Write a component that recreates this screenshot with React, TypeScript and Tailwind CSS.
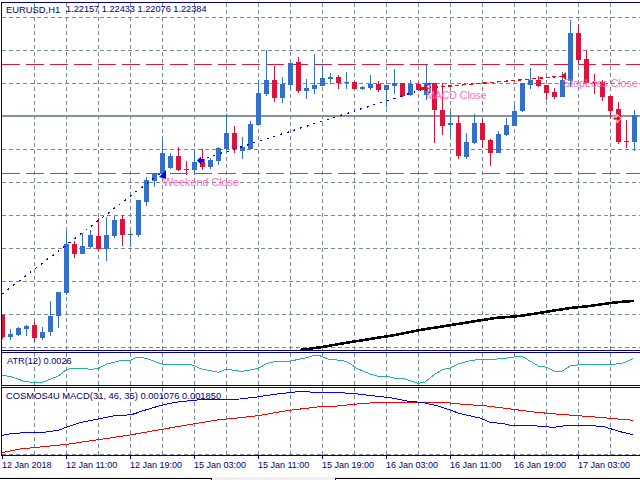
import React from 'react';

const BLUE = '#3370c9';
const RED = '#dc143c';
const GRID = '#778899';

// [colour, body top, body bottom, high, low], one bar every 8px starting at x=2
const candles: [string, number, number, number, number][] = [
  ['r', 315, 337, 315, 339], ['b', 334, 337, 329, 340], ['b', 328, 335, 327, 336], ['b', 326, 329, 325, 336],
  ['r', 325, 338, 322, 342], ['b', 332, 338, 327, 340], ['b', 316, 332, 301, 336], ['b', 292, 316, 292, 328],
  ['b', 244, 293, 231, 295], ['r', 244, 254, 241, 258], ['b', 246, 254, 233, 254], ['b', 235, 247, 230, 249],
  ['r', 236, 249, 218, 251], ['b', 235, 249, 217, 261], ['b', 220, 236, 216, 238], ['r', 219, 235, 215, 246],
  ['b', 234, 235, 231, 247], ['b', 200, 235, 200, 237], ['b', 180, 202, 177, 206], ['b', 173, 181, 173, 187],
  ['b', 153, 173, 139, 176], ['b', 156, 168, 153, 169], ['r', 156, 170, 147, 171], ['r', 169, 170, 161, 175],
  ['b', 162, 170, 150, 175], ['r', 162, 167, 149, 170], ['b', 160, 167, 158, 169], ['b', 148, 161, 147, 165],
  ['b', 133, 149, 114, 150], ['r', 133, 149, 126, 153], ['b', 147, 151, 137, 159], ['b', 124, 149, 121, 150],
  ['b', 93, 125, 80, 125], ['b', 80, 94, 50, 96], ['r', 80, 98, 66, 102], ['b', 84, 98, 77, 103],
  ['b', 63, 85, 62, 89], ['r', 62, 91, 57, 93], ['b', 88, 91, 79, 99], ['b', 85, 89, 54, 94],
  ['b', 78, 86, 64, 86], ['b', 77, 79, 73, 84], ['r', 77, 83, 75, 89], ['b', 82, 83, 72, 89],
  ['r', 82, 89, 81, 89], ['b', 87, 89, 86, 90], ['b', 84, 88, 75, 90], ['r', 84, 90, 81, 92],
  ['b', 85, 90, 85, 107], ['b', 83, 86, 69, 94], ['r', 83, 96, 83, 97], ['b', 84, 95, 80, 96],
  ['r', 84, 90, 82, 91], ['b', 83, 95, 65, 100], ['r', 83, 110, 83, 143], ['r', 110, 126, 83, 135],
  ['b', 123, 125, 111, 137], ['r', 123, 156, 116, 159], ['b', 142, 157, 133, 159], ['b', 123, 143, 114, 144],
  ['r', 123, 140, 119, 148], ['r', 140, 153, 139, 166], ['b', 134, 153, 131, 153], ['b', 125, 135, 118, 136],
  ['b', 111, 126, 105, 126], ['b', 83, 111, 83, 112], ['b', 80, 85, 68, 89], ['r', 80, 86, 76, 87],
  ['r', 85, 93, 85, 100], ['r', 92, 97, 88, 99], ['b', 80, 97, 72, 97], ['b', 33, 81, 20, 87],
  ['r', 33, 60, 24, 64], ['r', 59, 83, 50, 83], ['r', 82, 83, 74, 94], ['r', 82, 97, 80, 101],
  ['r', 96, 111, 96, 118], ['r', 109, 142, 102, 144], ['r', 141, 142, 120, 148], ['b', 115, 142, 110, 151],
];

const gridX = Array.from({ length: 19 }, (_, i) => 34 + i * 32);
const gridY = [17, 50, 83, 149, 182, 215, 248, 281, 314, 347];

const maLine =
  '300,350 322,347 345,343 370,339 395,335 420,330 445,326 470,322 495,318 520,316 545,312 570,308 590,306 610,303 625,301.5 634,301';

const atrLeft = [
  [5, 105], [40, 112], [75, 125], [100, 127], [125, 128], [145, 120], [175, 108], [200, 88], [225, 84], [250, 84],
  [270, 88], [295, 86], [320, 72], [345, 66], [365, 61], [390, 61], [410, 52], [425, 52], [445, 57], [485, 72],
  [560, 72], [580, 76], [600, 86], [625, 91], [655, 97], [680, 87], [700, 91], [725, 94], [750, 90], [775, 85],
  [800, 71], [820, 66], [845, 64], [870, 64], [895, 58], [920, 53], [940, 47], [960, 46],
];
const atrRight = [
  [0, 198], [25, 207], [70, 212], [90, 220], [110, 235], [150, 252], [175, 259], [205, 260], [225, 265], [250, 265],
  [275, 274], [295, 280], [315, 276], [345, 252], [370, 238], [390, 234], [415, 222], [450, 212], [480, 208], [520, 208],
  [560, 204], [605, 198], [625, 210], [655, 228], [680, 232], [705, 244], [725, 244], [750, 228], [785, 223], [880, 223],
  [915, 218], [940, 205],
];
const macdLeft = [
  [5, 286], [40, 280], [80, 278], [130, 277], [175, 271], [200, 261], [240, 248], [295, 237], [340, 228], [395, 224],
  [430, 212], [480, 197], [525, 187], [590, 180], [650, 178], [720, 177], [770, 171], [830, 162], [905, 154], [930, 156],
  [960, 157],
];
const macdRight = [
  [0, 308], [50, 308], [100, 310], [145, 316], [210, 323], [260, 333], [310, 338], [350, 347], [390, 360], [420, 371],
  [480, 384], [510, 397], [550, 401], [580, 408], [600, 406], [650, 408], [700, 412], [745, 406], [810, 406], [855, 411],
  [900, 425], [940, 434],
];
const signalLeft = [
  [5, 338], [60, 327], [130, 320], [200, 313], [295, 299], [390, 285], [485, 268], [580, 252], [650, 240], [720, 233],
  [775, 227], [860, 212], [960, 200],
];
const signalRight = [
  [0, 349], [40, 349], [110, 342], [165, 338], [380, 338], [420, 342], [500, 348], [580, 358], [650, 367], [720, 373],
  [800, 379], [860, 384], [940, 391],
];

const toPoints = (left: number[][], right: number[][]) =>
  [
    ...left.map(([u, v]) => `${u / 3},${340 + v / 3}`),
    ...right.map(([u, v]) => `${320 + u / 3},${290 + v / 3}`),
  ].join(' ');

const axisLabels = [
  '12 Jan 2018', '12 Jan 11:00', '12 Jan 19:00', '15 Jan 03:00', '15 Jan 11:00',
  '15 Jan 19:00', '16 Jan 03:00', '16 Jan 11:00', '16 Jan 19:00', '17 Jan 03:00',
];

const GridLines = ({ y1, y2 }: { y1: number; y2: number }) => (
  <g stroke={GRID} strokeDasharray="4 3" shapeRendering="crispEdges">
    {gridX.map((x) => (
      <line key={x} x1={x + 0.5} x2={x + 0.5} y1={y1} y2={y2} />
    ))}
  </g>
);

const Arrow = ({ d, fill, stroke }: { d: string; fill: string; stroke?: string }) => (
  <polygon points={d} fill={fill} stroke={stroke} strokeWidth={stroke ? 1 : 0} />
);

const MainChart = () => (
  <svg width="638" height="347" viewBox="2 3 638 347" className="block">
    <GridLines y1={3} y2={350} />
    <g stroke={GRID} strokeDasharray="4 3" shapeRendering="crispEdges">
      {gridY.map((y) => (
        <line key={y} x1={2} x2={640} y1={y + 0.5} y2={y + 0.5} />
      ))}
    </g>
    <g shapeRendering="crispEdges">
      <line x1={2} x2={640} y1={116} y2={116} stroke="#84929f" strokeWidth="2" />
      <line x1={2} x2={640} y1={64.5} y2={64.5} stroke={RED} strokeDasharray="18 6" />
      <line x1={2} x2={640} y1={173.5} y2={173.5} stroke={BLUE} strokeDasharray="18 6" />
    </g>
    <polyline points={maLine} fill="none" stroke="#000" strokeWidth="2.6" shapeRendering="crispEdges" />
    <g shapeRendering="crispEdges">
      {candles.map(([c, top, bottom, high, low], i) => {
        const x = 2 + i * 8;
        const color = c === 'b' ? BLUE : RED;
        return (
          <g key={i} fill={color}>
            <rect x={x} y={high} width={1} height={low - high} />
            <rect x={x - 2} y={top} width={5} height={bottom - top} />
          </g>
        );
      })}
    </g>
    <g fill="none" strokeWidth="1.3" shapeRendering="crispEdges">
      <line x1={2} y1={294} x2={162} y2={172} stroke="#0000ff" strokeDasharray="2 5" />
      <line x1={200} y1={160} x2={427} y2={88} stroke="#0000ff" strokeDasharray="2 5" />
      <line x1={427} y1={88} x2={565} y2={76} stroke="#ff0000" strokeDasharray="4 3" />
    </g>
    <Arrow d="166,170 166,179 159,177" fill="#0000ff" />
    <Arrow d="197,160.5 201,156.5 201,159 204.5,159 204.5,162 201,162 201,164.5" fill="#0000ff" />
    <Arrow d="424,88 430,83 430,93" fill="#fff" stroke="#0000ff" />
    <Arrow d="421,87 425,87 425,84.5 429,88.5 425,92 425,90 421,90" fill="#ff0000" />
    <Arrow d="561,76 566,72 566,80" fill="#ff0000" />
    <Arrow d="613,117 617,117 617,114 621,118.5 617,123 617,120 613,120" fill="#ff0000" stroke="#fff" />
  </svg>
);

const ChartLabel = ({ className, children }: { className: string; children: React.ReactNode }) => (
  <span className={`absolute whitespace-nowrap leading-none ${className}`}>{children}</span>
);

export default function App() {
  return (
    <div className="w-[640px] h-[480px] bg-white overflow-hidden flex flex-col pt-[2px] font-['Liberation_Sans',sans-serif] text-[#000080]">
      <div className="ml-px flex flex-col border-l border-[#000080]">
        <div className="relative h-[349px] border-y border-[#000080]">
          <MainChart />
          <ChartLabel className="left-[4px] top-[2px] text-[9.2px] flex">
            <span className="w-[60px] text-[9.4px]">EURUSD,H1</span>
            <span>1.22157 1.22433 1.22076 1.22384</span>
          </ChartLabel>
          <ChartLabel className="left-[161px] top-[174px] text-[10.8px] text-[#ff70b8]">Weekend Close</ChartLabel>
          <ChartLabel className="left-[424px] top-[87px] text-[10.5px] text-[#ff70b8]">MACD Close</ChartLabel>
          <ChartLabel className="left-[561px] top-[75px] text-[10.7px] text-[#ff70b8]">StopLoss Close</ChartLabel>
        </div>
        <div className="relative h-[34px] mt-px border-y border-[#000080]">
          <svg width="638" height="32" viewBox="2 353 638 32" className="block">
            <GridLines y1={353} y2={385} />
            <polyline
              points={toPoints(atrLeft, atrRight)}
              fill="none"
              stroke="#20b2aa"
              strokeWidth="1"
              shapeRendering="crispEdges"
            />
          </svg>
          <ChartLabel className="left-[5px] top-[4px] text-[9.2px]">ATR(12) 0.0026</ChartLabel>
        </div>
        <div className="relative h-[69px] mt-px border-y border-[#000080]">
          <svg width="638" height="67" viewBox="2 388 638 67" className="block">
            <GridLines y1={388} y2={455} />
            <line x1={2} x2={640} y1={454.5} y2={454.5} stroke={GRID} strokeDasharray="4 3" shapeRendering="crispEdges" />
            <polyline
              points={toPoints(signalLeft, signalRight)}
              fill="none"
              stroke="#ff0000"
              strokeWidth="1"
              shapeRendering="crispEdges"
            />
            <polyline
              points={toPoints(macdLeft, macdRight)}
              fill="none"
              stroke="#0000ff"
              strokeWidth="1"
              shapeRendering="crispEdges"
            />
          </svg>
          <ChartLabel className="left-[4px] top-[3px] text-[9.4px]">
            COSMOS4U MACD(31, 46, 35) 0.001076 0.001850
          </ChartLabel>
        </div>
      </div>
      <div className="flex h-[21px] pl-[2px] text-[9px] leading-none">
        {axisLabels.map((label) => (
          <div key={label} className="w-[64px] shrink-0 flex flex-col">
            <div className="w-px h-[3px] bg-[#000080]" />
            <span className="whitespace-nowrap mt-[2px]">{label}</span>
          </div>
        ))}
      </div>
      <div className="h-[3px] bg-[#f0f0f0] pt-px flex justify-between">
        <div className="w-[212px] border-t border-r border-black bg-white" />
        <div className="w-[305px] border-t border-l border-black bg-white" />
      </div>
    </div>
  );
}
